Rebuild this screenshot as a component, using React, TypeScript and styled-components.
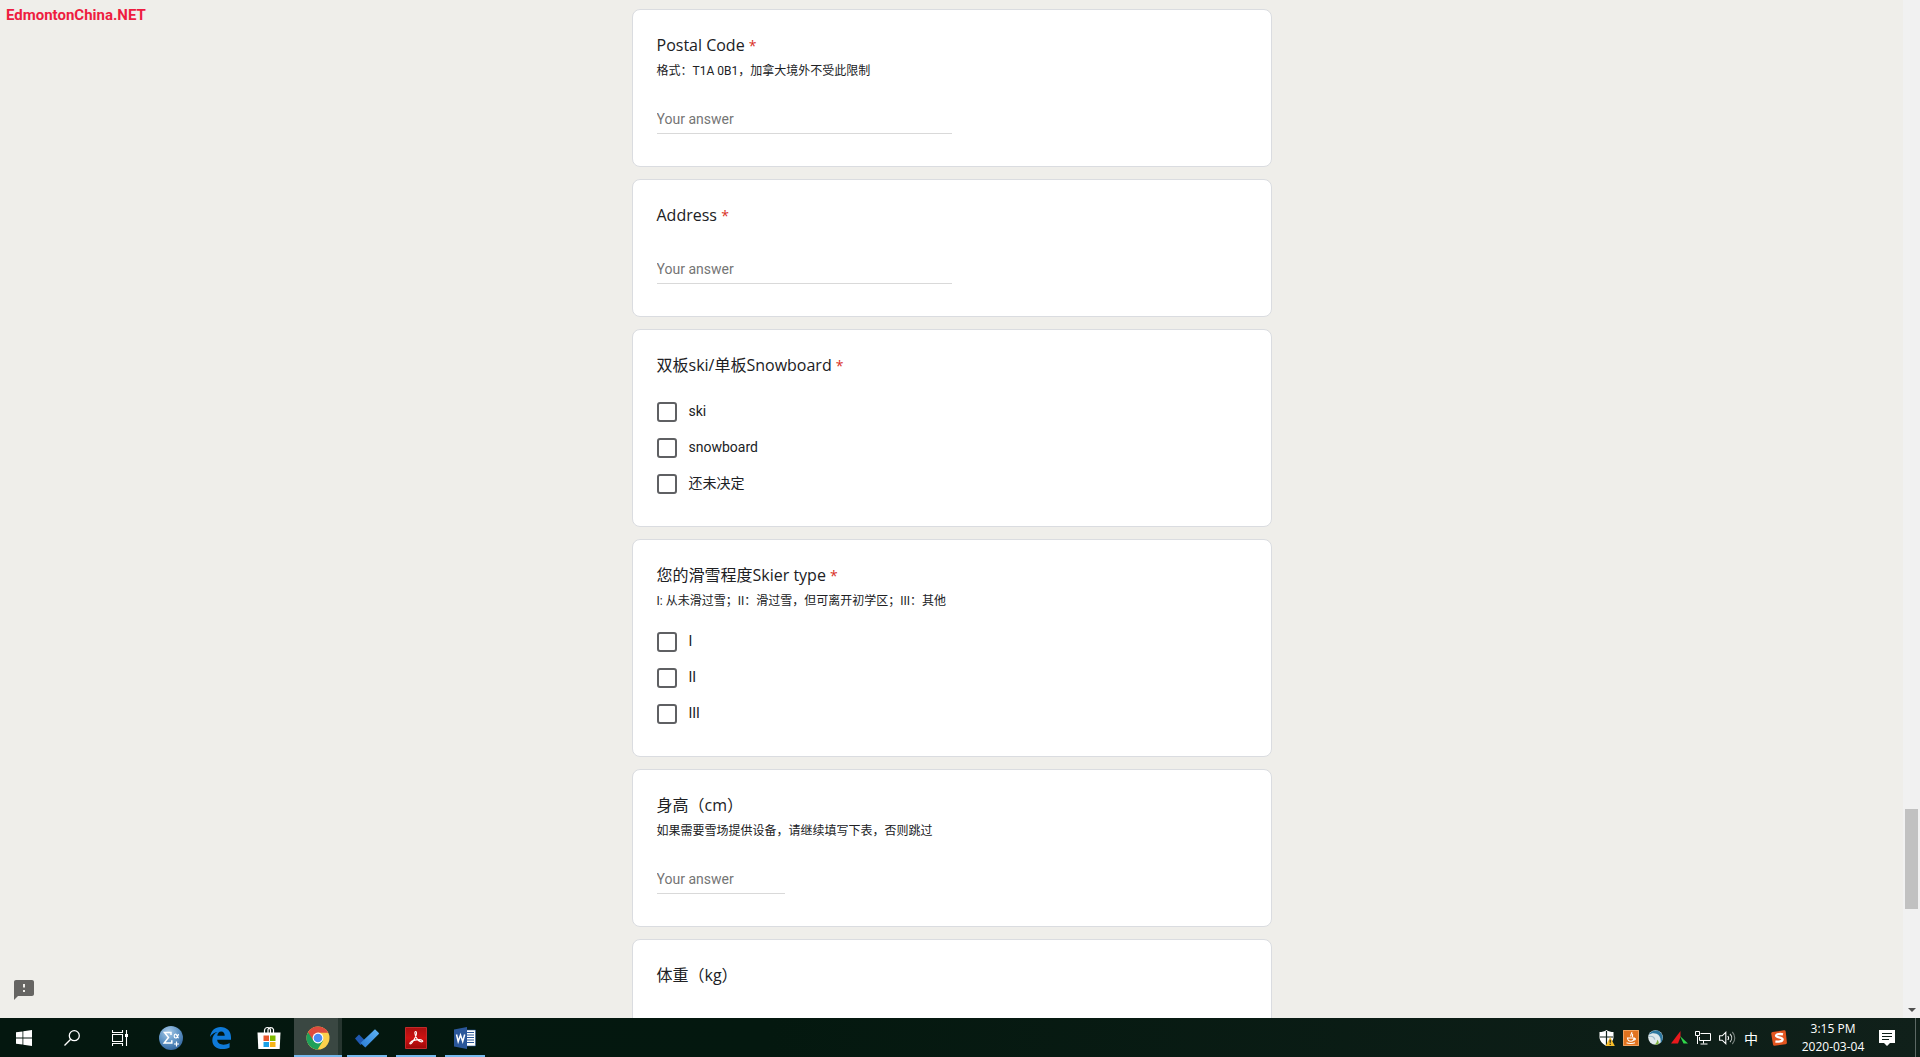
import React from "react";
import styled, { createGlobalStyle } from "styled-components";

const uiFont = `Roboto, "Noto Sans CJK SC", sans-serif`;
const titleFont = `"Open Sans", "Noto Sans CJK SC", sans-serif`;

const GlobalStyle = createGlobalStyle`
  * { box-sizing: border-box; }
  body { margin: 0; background: #efeeea; font-family: ${uiFont}; }
  button { font: inherit; color: inherit; background: none; border: 0; padding: 0; }
`;

const Desktop = styled.div`
  height: 100vh;
  display: flex;
  flex-direction: column;
  overflow: hidden;
`;

const Browser = styled.div`
  position: relative;
  flex: 1;
  min-height: 0;
  display: flex;
`;

const Page = styled.main`
  flex: 1;
  min-width: 0;
  overflow: hidden;
  padding: 9px 16px 0;
`;

const Form = styled.form`
  width: 100%;
  max-width: 640px;
  margin: 0 auto;
  display: flex;
  flex-direction: column;
  gap: 12px;
`;

const Card = styled.section`
  background: #fff;
  border: 1px solid #dadce0;
  border-radius: 8px;
  padding: 24px;
`;

const Title = styled.label`
  display: block;
  padding-bottom: 2px;
  font-family: ${titleFont};
  font-size: 16px;
  line-height: 22px;
  color: #202124;
`;

const Required = styled.span`
  font-size: 14px;
  line-height: 1;
  color: #d93025;
`;

const Description = styled.p`
  margin: 4px 0 -2px;
  font-size: 12px;
  line-height: 18px;
  color: #202124;
`;

const Answer = styled.input<{ $short?: boolean }>`
  display: block;
  width: ${(p) => (p.$short ? "128px" : "50%")};
  height: 28px;
  margin: 28px 0 8px;
  padding: 0 0 2px;
  border: 0;
  border-bottom: 1px solid #d9d9d9;
  border-radius: 0;
  outline: 0;
  background: none;
  font-family: ${uiFont};
  font-size: 14px;
  color: #202124;
  &::placeholder {
    color: #757575;
    opacity: 1;
  }
`;

const Options = styled.div`
  margin-top: 16px;
`;

const Option = styled.label`
  display: flex;
  align-items: center;
  gap: 12px;
  height: 36px;
  font-size: 14px;
  line-height: 20px;
  color: #202124;
`;

const OptionText = styled.span`
  padding-bottom: 2px;
`;

const Tick = styled.input`
  appearance: none;
  width: 20px;
  height: 20px;
  margin: 0;
  border: 2px solid #5f6063;
  border-radius: 3px;
  &:checked {
    background: #5f6063;
  }
`;

const Watermark = styled.div`
  position: absolute;
  left: 6px;
  top: 4px;
  font: bold 15px/22px Roboto, sans-serif;
  color: #ee1c40;
`;

const Feedback = styled.button`
  position: absolute;
  left: 12px;
  bottom: 16px;
  width: 24px;
  height: 24px;
  color: #666563;
  svg {
    display: block;
  }
`;

const ScrollTrack = styled.div`
  width: 17px;
  background: #f1f1f1;
  display: flex;
  flex-direction: column;
  align-items: center;
`;

const ScrollBefore = styled.div`
  flex: 809;
`;
const ScrollThumb = styled.div`
  flex: 100;
  width: 13px;
  background: #c1c1c1;
`;
const ScrollAfter = styled.div`
  flex: 92;
`;
const ScrollArrow = styled.button`
  width: 17px;
  height: 17px;
  display: flex;
  align-items: center;
  justify-content: center;
`;

const Taskbar = styled.footer`
  height: 39px;
  display: flex;
  justify-content: space-between;
  background: linear-gradient(90deg, #04170f 0%, #04180f 40%, #10201a 100%);
  color: #fff;
`;

const Apps = styled.nav`
  display: flex;
`;

const Pinned = styled.div`
  display: flex;
  gap: 1px;
  padding-left: 3px;
`;

const AppButton = styled.button<{ $active?: boolean; $running?: boolean }>`
  width: 48px;
  height: 39px;
  display: flex;
  flex-direction: column;
  align-items: center;
  background: ${(p) =>
    p.$active ? "linear-gradient(90deg, #3a4742 44px, #26352f 44px)" : "none"};
  &::after {
    content: "";
    width: ${(p) => (p.$active ? "48px" : "40px")};
    height: 2px;
    background: ${(p) => (p.$running || p.$active ? "#76b9ed" : "transparent")};
  }
`;

const Glyph = styled.span`
  flex: 1;
  display: flex;
  align-items: center;
  padding-top: 2px;
`;

const Tray = styled.div`
  display: flex;
  align-items: center;
`;

const TrayIcon = styled.button<{ $wide?: boolean }>`
  width: ${(p) => (p.$wide ? "32px" : "24px")};
  height: 39px;
  display: flex;
  align-items: center;
  justify-content: center;
  font-size: 14px;
`;

const Clock = styled.button`
  width: 76px;
  font-family: "Open Sans", sans-serif;
  font-size: 12px;
  line-height: 18px;
  text-align: center;
`;

const Action = styled(TrayIcon)`
  width: 32px;
  margin-right: 12px;
`;

const ShowDesktop = styled.button`
  width: 5px;
  height: 39px;
  border-left: 1px solid #5c6864;
`;

type Question = {
  id: string;
  title: string;
  required?: boolean;
  description?: string;
  options?: string[];
  short?: boolean;
};

const questions: Question[] = [
  { id: "postal", title: "Postal Code", required: true, description: "格式：T1A 0B1，加拿大境外不受此限制" },
  { id: "address", title: "Address", required: true },
  { id: "board", title: "双板ski/单板Snowboard", required: true, options: ["ski", "snowboard", "还未决定"] },
  {
    id: "level",
    title: "您的滑雪程度Skier type",
    required: true,
    description: "I: 从未滑过雪；II：滑过雪，但可离开初学区；III：其他",
    options: ["I", "II", "III"],
  },
  { id: "height", title: "身高（cm）", description: "如果需要雪场提供设备，请继续填写下表，否则跳过", short: true },
  { id: "weight", title: "体重（kg）", short: true },
];

function QuestionCard({ q }: { q: Question }) {
  const titleId = `${q.id}-title`;
  return (
    <Card>
      <Title as={q.options ? "div" : "label"} id={titleId} {...(q.options ? {} : { htmlFor: q.id })}>
        {q.title}{" "}
        {q.required && <Required>*</Required>}
      </Title>
      {q.description && <Description>{q.description}</Description>}
      {q.options ? (
        <Options role="group" aria-labelledby={titleId}>
          {q.options.map((o) => (
            <Option key={o}>
              <Tick type="checkbox" name={q.id} value={o} />
              <OptionText>{o}</OptionText>
            </Option>
          ))}
        </Options>
      ) : (
        <Answer id={q.id} type="text" placeholder="Your answer" $short={q.short} />
      )}
    </Card>
  );
}

const StartIcon = () => (
  <svg width="16" height="16" viewBox="0 0 16 16" fill="#fff">
    <path d="M0 2.3 6.5 1.4v6.2H0zM7.3 1.3 16 0v7.6H7.3zM0 8.4h6.5v6.2L0 13.7zM7.3 8.4H16V16l-8.7-1.3z" />
  </svg>
);

const SearchIcon = () => (
  <svg width="16" height="16" viewBox="0 0 16 16" fill="none" stroke="#fff" strokeWidth="1.3">
    <circle cx="10.3" cy="5.7" r="5" />
    <path d="M6.7 9.3.5 15.5" />
  </svg>
);

const TaskViewIcon = () => (
  <svg width="16" height="16" viewBox="0 0 16 16" fill="none" stroke="#fff" strokeWidth="1.1">
    <path d="M.5 4.5h10v7H.5zM.5 0v2.5h10V0M.5 16v-2.5h10V16M14.5 0v16" />
    <path d="M13 4h3v3h-3z" fill="#fff" stroke="none" />
  </svg>
);

const SigmaIcon = () => (
  <svg width="24" height="24" viewBox="0 0 24 24">
    <defs>
      <radialGradient id="sigma" cx=".4" cy=".25" r=".8">
        <stop offset="0" stopColor="#a9cbe8" />
        <stop offset=".55" stopColor="#5f93c4" />
        <stop offset="1" stopColor="#2f639c" />
      </radialGradient>
    </defs>
    <circle cx="12" cy="12" r="12" fill="url(#sigma)" />
    <path d="M12 9V6.500H5.500l4 5-4.300 5.500h7.600v-2.800" fill="none" stroke="#fff" strokeWidth="1.500" />
    <path d="M19.500 8c-.8 3-1.700 4-2.900 4-1.900 0-1.900-3.800 0-3.800 1.300 0 1.700 3.800 3.200 3.800M17.500 15.500v5M15 18h5" fill="none" stroke="#fff" strokeWidth="1.200" />
  </svg>
);

const EdgeIcon = () => (
  <svg width="21" height="22" viewBox="0 0 21 22" fill="#0f7ad8">
    <path d="M0 10C1 3.500 5 0 10.600 0 16.800 0 21 4.200 21 10.200v2.600H7.200c.2 3.400 3.100 4.900 6.300 4.900 2.300 0 4.300-.7 6.100-1.700v4.500C17.600 21.600 15 22 12.500 22 6.400 22 2.300 18.700 2.300 13.200c0-3.800 2-6.800 5.300-8.200C4.600 5.200 1.700 7 0 10zm7.300-1.300h7.400c0-2.700-1.200-4.300-3.500-4.300S7.600 6.100 7.300 8.700z" />
  </svg>
);

const StoreIcon = () => (
  <svg width="24" height="24" viewBox="0 0 24 24">
    <path d="M7.500 7V4.500a3 3 0 0 1 6 0V7M11 7V3.500a3 3 0 0 1 5.500 0V7" fill="none" stroke="#fff" strokeWidth="1.200" />
    <path d="M.5 6.500h23L22.700 23H1.300z" fill="#fff" />
    <path d="M6.500 9.500H12V15H6.500z" fill="#e8562c" />
    <path d="M13 9.500h5.500V15H13z" fill="#7fba00" />
    <path d="M6.500 16H12v5H6.500z" fill="#1aa0e6" />
    <path d="M13 16h5.500v5H13z" fill="#f7b51a" />
  </svg>
);

const ChromeIcon = () => (
  <svg width="24" height="24" viewBox="0 0 24 24">
    <circle cx="12" cy="12" r="11.500" fill="#fcd04b" />
    <path d="M12 12 2 6.200A11.500 11.500 0 0 0 11.600 23.500L17 14.800z" fill="#1fa05a" />
    <path d="M12 6.700h10.200A11.500 11.500 0 0 0 2 6.200l5.300 8.300z" fill="#dd4b3e" />
    <circle cx="12" cy="12" r="5.400" fill="#fff" />
    <circle cx="12" cy="12" r="4.300" fill="#4a8af4" />
  </svg>
);

const TodoIcon = () => (
  <svg width="24" height="20" viewBox="0 0 24 20">
    <defs>
      <linearGradient id="todo" x1="0" y1="1" x2="1" y2="0">
        <stop offset="0" stopColor="#2a7cd6" />
        <stop offset="1" stopColor="#5fb4f5" />
      </linearGradient>
    </defs>
    <path d="m4 6.500 6.500 6.500L5.500 17 0 10.500z" fill="#1f58b0" />
    <path d="M20 1.200 23.800 5a1 1 0 0 1 0 1L10.300 19.500 5.500 15z" fill="url(#todo)" />
  </svg>
);

const PdfIcon = () => (
  <svg width="22" height="22" viewBox="0 0 22 22">
    <defs>
      <linearGradient id="pdf" x1="0" y1="0" x2="0" y2="1">
        <stop offset="0" stopColor="#a80f0f" />
        <stop offset=".5" stopColor="#cf1212" />
        <stop offset="1" stopColor="#9c0808" />
      </linearGradient>
    </defs>
    <path d="M.5.500h21v21H.5z" fill="url(#pdf)" stroke="#c22a2a" />
    <path d="M10.700 4.500c-1.500 0-.8 3.300.6 6 1.500 2.900 4 4.500 5.700 4.300 1.800-.3.400-2.200-3-2.200-3.300 0-7 1.200-8.600 2.700-1.500 1.500.2 2.500 1.800.2 1.800-2.600 4.300-7.300 4.300-9.500 0-1-.3-1.500-.8-1.500z" fill="none" stroke="#fff" strokeWidth="1.100" />
  </svg>
);

const WordIcon = () => (
  <svg width="22" height="22" viewBox="0 0 22 22">
    <path d="M12 3h9.500v16H12z" fill="#fff" stroke="#2b579a" strokeWidth=".6" />
    <path d="M13 5.500h7M13 8h7M13 10.500h7M13 13h7M13 15.500h7" stroke="#2b579a" strokeWidth="1.100" />
    <path d="M0 2.500 13 0v22L0 19.500z" fill="#2b579a" />
    <path d="m2.500 7.500 1.700 7L6.500 8l2.200 6.500 2-7" fill="none" stroke="#fff" strokeWidth="1.500" />
  </svg>
);

const ShieldIcon = () => (
  <svg width="16" height="16" viewBox="0 0 16 16">
    <path d="M7.500 0C9.500 1.500 12 2 14.500 2v5c0 4-3 7-7 9-4-2-7-5-7-9V2C3 2 5.500 1.500 7.500 0z" fill="#fff" />
    <path d="M7.500 1v14M1 7h13" stroke="#10201a" strokeWidth="1.200" />
    <path d="m11.200 7 4.600 9H6.600z" fill="#f7bd2a" />
    <path d="M11.200 9.800v3M11.200 13.700V15" stroke="#222" strokeWidth="1.200" />
  </svg>
);

const JavaIcon = () => (
  <svg width="16" height="16" viewBox="0 0 16 16">
    <path d="M0 0h16v16H0z" fill="#e2731f" />
    <path d="M.5.500h15v15H.5z" fill="none" stroke="#f0a15d" />
    <path d="M8.700 2c1 1.700-2 2.200-.7 4.500M10 4c-1.500 1 .3 1.500-.6 3M4.500 8h6.500c0 2.500-1 3.200-3.200 3.200S4.700 10.500 4.500 8zM11 8.500c2-.5 2 1.500-.5 1.800M3.500 12.800c2 1 6.500 1 8.500 0" fill="none" stroke="#fff" strokeWidth="1.100" />
  </svg>
);

const SwirlIcon = () => (
  <svg width="15" height="15" viewBox="0 0 15 15">
    <circle cx="7.500" cy="7.500" r="7.300" fill="#dfe9ec" />
    <path d="M.8 4.800C3 .5 8.500-.8 12 2c3.500 3 3.400 8.500.5 11.200.8-4.500-.7-8-4-9.400C6 2.800 3 3.200.8 4.800z" fill="#2d78a0" />
    <path d="M6.500 14.600c1.800-1.200 2.700-2.700 2.600-4.900 1.500 1.300 2 2.900 1.400 4.200-1.200.7-2.700.9-4 .7z" fill="#7fb23d" />
    <path d="M1 6.500c3-.8 5.200.5 5.800 3" fill="none" stroke="#9fbccb" strokeWidth="1.200" />
  </svg>
);

const ArrowIcon = () => (
  <svg width="17" height="13" viewBox="0 0 17 13">
    <path d="M0 12.500 9.500 0v6L7 12.500z" fill="#e8191c" />
    <path d="m9 5 8 7.500h-4.500z" fill="#2fd84a" />
  </svg>
);

const NetworkIcon = () => (
  <svg width="16" height="14" viewBox="0 0 16 14" fill="none" stroke="#fff">
    <path d="M5.500 2.500h10v7h-11V6M8.500 9.500v3M5.500 13h7M.5.500h4v4h-4zM2.500 4.500v8.500" />
  </svg>
);

const SpeakerIcon = () => (
  <svg width="17" height="14" viewBox="0 0 17 14" fill="none" stroke="#fff" strokeWidth="1.100">
    <path d="M.6 4.800h2.600l3.600-3.500v11.400L3.200 9.200H.6z" />
    <path d="M8.800 5c1 1.200 1 2.800 0 4" />
    <path d="M11 3c2.200 2.300 2.200 5.700 0 8" opacity=".8" />
    <path d="M13.300 1c3.300 3.500 3.300 8.500 0 12" opacity=".45" />
  </svg>
);

const SogouIcon = () => (
  <svg width="16" height="16" viewBox="0 0 16 16">
    <path d="M1.500 2 13 .3a1.500 1.500 0 0 1 1.700 1.200l1.200 11a1.500 1.500 0 0 1-1.300 1.700L3.700 15.800A1.500 1.500 0 0 1 2 14.600L.2 3.500A1.500 1.500 0 0 1 1.500 2z" fill="#e2551f" />
    <path d="M12 4.300c-2.500-.6-6.800-.2-7 1.500-.2 2 6.500 1.200 6.600 3.500.1 2.200-4.600 2.700-7.200 2" fill="none" stroke="#fff" strokeWidth="2.300" />
  </svg>
);

const MessageIcon = () => (
  <svg width="16" height="16" viewBox="0 0 16 16">
    <path d="M0 0h16v13h-5L8 16l-3-3H0z" fill="#fff" />
    <path d="M3 3.500h10M3 6.500h10M3 9.500h7" stroke="#10201a" />
  </svg>
);

const launchers = [
  { name: "Sigma", icon: <SigmaIcon /> },
  { name: "Edge", icon: <EdgeIcon /> },
  { name: "Store", icon: <StoreIcon /> },
  { name: "Chrome", icon: <ChromeIcon />, active: true },
  { name: "To Do", icon: <TodoIcon />, running: true },
  { name: "Acrobat Reader", icon: <PdfIcon />, running: true },
  { name: "Word", icon: <WordIcon />, running: true },
];

const system = [
  { name: "Start", icon: <StartIcon /> },
  { name: "Search", icon: <SearchIcon /> },
  { name: "Task view", icon: <TaskViewIcon /> },
];

const tray = [
  { name: "Security", icon: <ShieldIcon /> },
  { name: "Java", icon: <JavaIcon /> },
  { name: "VPN", icon: <SwirlIcon /> },
  { name: "Updates", icon: <ArrowIcon /> },
  { name: "Network", icon: <NetworkIcon /> },
  { name: "Volume", icon: <SpeakerIcon /> },
];

export default function App() {
  return (
    <Desktop>
      <GlobalStyle />
      <Browser>
        <Page>
          <Form>
            {questions.map((q) => (
              <QuestionCard key={q.id} q={q} />
            ))}
          </Form>
        </Page>
        <ScrollTrack>
          <ScrollBefore />
          <ScrollThumb />
          <ScrollAfter />
          <ScrollArrow aria-label="Scroll down">
            <svg width="8" height="4" viewBox="0 0 8 4" fill="#505050">
              <path d="M0 0h8L4 4z" />
            </svg>
          </ScrollArrow>
        </ScrollTrack>
        <Watermark>EdmontonChina.NET</Watermark>
        <Feedback aria-label="Report a problem">
          <svg width="24" height="24" viewBox="0 0 24 24" fill="currentColor">
            <path d="M20 2H4c-1.100 0-1.990.9-1.990 2L2 22l4-4h14c1.100 0 2-.9 2-2V4c0-1.100-.9-2-2-2zm-7 7.500h-2V6h2v3.500zm0 4.500h-2v-2h2v2z" />
          </svg>
        </Feedback>
      </Browser>
      <Taskbar>
        <Apps>
          {system.map((a) => (
            <AppButton key={a.name} aria-label={a.name}>
              <Glyph>{a.icon}</Glyph>
            </AppButton>
          ))}
          <Pinned>
            {launchers.map((a) => (
              <AppButton key={a.name} aria-label={a.name} $active={a.active} $running={a.running}>
                <Glyph>{a.icon}</Glyph>
              </AppButton>
            ))}
          </Pinned>
        </Apps>
        <Tray>
          {tray.map((t) => (
            <TrayIcon key={t.name} aria-label={t.name}>
              {t.icon}
            </TrayIcon>
          ))}
          <TrayIcon>中</TrayIcon>
          <TrayIcon $wide aria-label="Sogou input">
            <SogouIcon />
          </TrayIcon>
          <Clock>
            3:15 PM
            <br />
            2020-03-04
          </Clock>
          <Action aria-label="Notifications">
            <MessageIcon />
          </Action>
          <ShowDesktop aria-label="Show desktop" />
        </Tray>
      </Taskbar>
    </Desktop>
  );
}
